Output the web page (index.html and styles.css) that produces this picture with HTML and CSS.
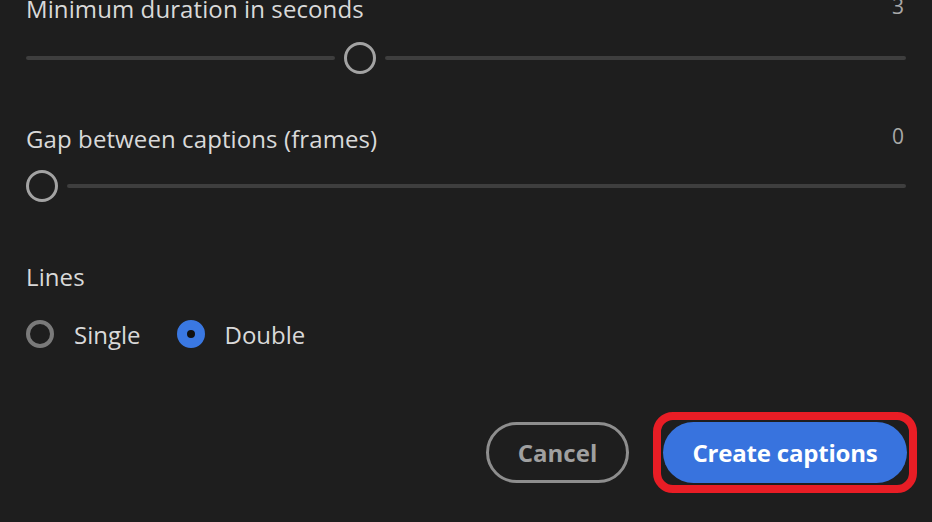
FILE: index.html
```html
<!DOCTYPE html>
<html lang="en">
<head>
<meta charset="utf-8">
<link rel="stylesheet" href="styles.css">
</head>
<body>
<div class="panel">
  <section class="field first">
    <div class="field-head">
      <span class="label">Minimum duration in seconds</span>
      <span class="value">3</span>
    </div>
    <div class="slider">
      <span class="track" style="flex: 0 0 309px"></span>
      <span class="thumb"></span>
      <span class="track grow"></span>
    </div>
  </section>

  <section class="field second">
    <div class="field-head">
      <span class="label">Gap between captions (frames)</span>
      <span class="value">0</span>
    </div>
    <div class="slider">
      <span class="thumb"></span>
      <span class="track grow"></span>
    </div>
  </section>

  <section class="field lines">
    <div class="field-head">
      <span class="label">Lines</span>
    </div>
    <div class="radios">
      <label class="radio"><span class="dot"></span><span class="radio-text">Single</span></label>
      <label class="radio checked"><span class="dot"></span><span class="radio-text">Double</span></label>
    </div>
  </section>

  <div class="actions">
    <button class="btn btn-cancel">Cancel</button>
    <span class="highlight"><button class="btn btn-primary">Create captions</button></span>
  </div>
</div>
</body>
</html>
```

FILE: styles.css
```css
* { box-sizing: border-box; }
html, body {
  margin: 0;
  padding: 0;
  background: #1e1e1e;
  width: 932px;
  height: 522px;
  overflow: hidden;
}
body {
  font-family: "Open Sans", "Lato", sans-serif;
  color: #dcdcdc;
}
.panel {
  display: flex;
  flex-direction: column;
  padding: 0 26px;
}
.field-head {
  display: flex;
  justify-content: space-between;
  align-items: baseline;
  height: 30px;
  line-height: 30px;
}
.label {
  font-size: 24px;
  color: #d9d9d9;
  letter-spacing: 0.1px;
}
.value {
  align-self: flex-start;
  font-size: 21px;
  line-height: 21px;
  margin-top: 2px;
  color: #a8a8a8;
  padding-right: 2px;
}
.first { margin-top: -6px; }
.first .slider { margin-top: 18px; }
.second { margin-top: 50px; }
.lines { margin-top: 60px; }
.slider {
  display: flex;
  align-items: center;
  height: 32px;
  margin-top: 16px;
  gap: 9px;
}
.track {
  display: block;
  height: 4px;
  border-radius: 2px;
  background: #3e3e3e;
}
.track.grow { flex: 1 1 auto; }
.thumb {
  flex: 0 0 32px;
  width: 32px;
  height: 32px;
  border-radius: 50%;
  border: 3px solid #a3a3a3;
  background: #1e1e1e;
}
.radios {
  display: flex;
  align-items: center;
  gap: 36px;
  margin-top: 22px;
  height: 40px;
}
.radio {
  display: flex;
  align-items: center;
  gap: 20px;
  font-size: 24px;
  color: #d9d9d9;
}
.dot {
  width: 28px;
  height: 28px;
  border-radius: 50%;
  border: 4px solid #7a7a7a;
  background: #1e1e1e;
  display: block;
}
.radio.checked .dot {
  border: 10px solid #3a78e2;
  background: #111;
}
.actions {
  display: flex;
  justify-content: flex-end;
  align-items: center;
  gap: 24px;
  margin-top: 58px;
  margin-right: -11px;
}
.btn {
  height: 61px;
  border-radius: 31px;
  font-family: inherit;
  font-size: 24px;
  font-weight: 700;
  cursor: pointer;
}
.btn-cancel {
  width: 143px;
  background: transparent;
  border: 3px solid #8e8e8e;
  color: #a0a0a0;
}
.btn-primary {
  width: 244px;
  background: #3873de;
  border: none;
  color: #ffffff;
  display: block;
  letter-spacing: -0.2px;
}
.highlight {
  display: block;
  border: 8px solid #e81d25;
  border-radius: 20px;
  padding: 2px;
}
```
